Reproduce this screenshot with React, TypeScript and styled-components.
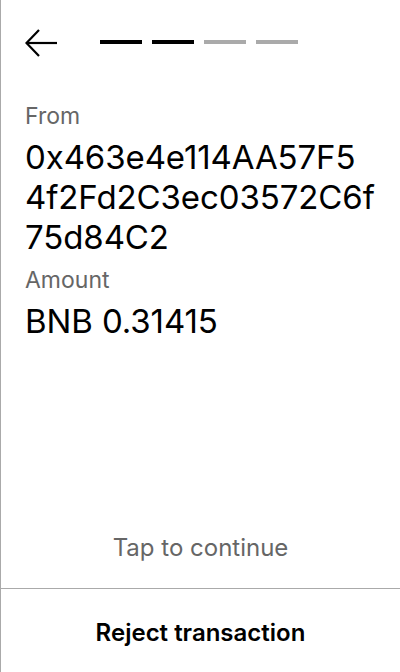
import React from "react";
import styled, { createGlobalStyle } from "styled-components";

const Global = createGlobalStyle`
  html, body { margin: 0; padding: 0; background: #fff; }
  body { font-family: Inter, "Noto Sans", sans-serif; -webkit-font-smoothing: antialiased; }
`;

const Screen = styled.div`
  box-sizing: border-box;
  width: 400px;
  height: 672px;
  border-left: 1px solid #aaaaaa;
  display: flex;
  flex-direction: column;
  background: #fff;
`;

const Header = styled.div`
  display: flex;
  align-items: center;
  padding: 29px 0 0 24px;
  height: 28px;
`;

const BackButton = styled.button`
  border: 0;
  background: none;
  padding: 0;
  margin: 0;
  width: 32px;
  height: 28px;
  display: flex;
  align-items: center;
  cursor: pointer;
`;

const Steps = styled.div`
  display: flex;
  gap: 10px;
  margin-left: 43px;
  margin-top: -2px;
`;

const Step = styled.div<{ $done: boolean }>`
  width: 42px;
  height: 4px;
  background: ${(p) => (p.$done ? "#000" : "#aaaaaa")};
`;

const Content = styled.div`
  flex: 1;
  padding: 45px 24px 0 24px;
  display: flex;
  flex-direction: column;
`;

const Label = styled.div<{ $space?: number }>`
  font-size: 23px;
  line-height: 28px;
  color: #666666;
  margin-top: ${(p) => p.$space ?? 0}px;
`;

const Value = styled.div`
  font-size: 33px;
  line-height: 40px;
  letter-spacing: -0.1px;
  color: #000;
  margin-top: 7px;
`;

const ValueLine = styled.span`
  display: block;
  white-space: nowrap;
`;

const Hint = styled.div`
  text-align: center;
  font-size: 24px;
  line-height: 28px;
  color: #666666;
  padding-bottom: 26px;
`;

const Footer = styled.button`
  border: 0;
  border-top: 1px solid #aaaaaa;
  background: none;
  height: 84px;
  font-family: Inter, "Noto Sans", sans-serif;
  font-size: 24px;
  font-weight: 600;
  color: #000;
  cursor: pointer;
  padding: 4px 0 0 0;
`;

const steps = [true, true, false, false];
const addressLines = ["0x463e4e114AA57F5", "4f2Fd2C3ec03572C6f", "75d84C2"];

export default function App() {
  return (
    <>
      <Global />
      <Screen>
        <Header>
          <BackButton aria-label="Back">
            <svg width="32" height="28" viewBox="0 0 32 28" fill="none">
              <path d="M1.5 14 H32" stroke="#000" strokeWidth="2.2" />
              <path d="M14 1 L1.5 14 L14 27" stroke="#000" strokeWidth="2.2" />
            </svg>
          </BackButton>
          <Steps>
            {steps.map((d, i) => (
              <Step key={i} $done={d} />
            ))}
          </Steps>
        </Header>
        <Content>
          <Label>From</Label>
          <Value>
            {addressLines.map((l) => (
              <ValueLine key={l}>{l}</ValueLine>
            ))}
          </Value>
          <Label $space={9}>Amount</Label>
          <Value>BNB 0.31415</Value>
        </Content>
        <Hint>Tap to continue</Hint>
        <Footer>Reject transaction</Footer>
      </Screen>
    </>
  );
}
